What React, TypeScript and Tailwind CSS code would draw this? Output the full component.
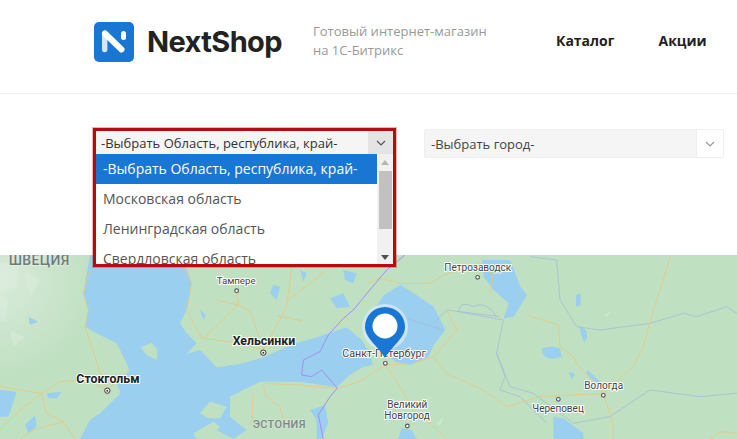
const roads = [
  "M270 60 L250 130 L265 180 L255 230 L285 320 L310 400 L322 420",
  "M0 410 L125 430 L180 395 L260 390 L322 420 L385 360",
  "M125 430 L140 490 L190 515 L225 567",
  "M0 540 L60 480 L125 430",
  "M190 515 L100 540 L60 567",
  "M550 50 L575 100 L560 180 L605 265 L695 275 L790 300 L860 170 L875 50",
  "M710 122 L715 165 L610 265",
  "M715 165 L750 185 L790 295",
  "M715 165 L650 150",
  "M830 198 L905 212",
  "M865 150 L980 60",
  "M790 400 L900 405 L1010 415 L1080 395 L1156 345",
  "M760 430 L755 520",
  "M790 405 L800 440 L840 470 L850 510",
  "M1101 100 L1140 85 L1200 100 L1290 100 L1330 75 L1440 40 L1480 75 L1470 130",
  "M1156 345 L1240 340 L1300 320 L1380 230",
  "M1340 180 L1370 240",
  "M1156 345 L1200 410 L1240 480 L1290 520 L1340 567",
  "M1300 320 L1340 370 L1450 420 L1520 470 L1620 440 L1810 430",
  "M1580 195 L1675 225 L1680 290 L1720 320 L1730 340 L1810 430",
  "M1810 430 L1900 350 L1930 290 L1960 180 L1990 90 L2010 20",
  "M1810 430 L1840 520 L1840 567",
  "M2130 567 L2160 545 L2211 550",
]

const regionLines = [
  "M1490 200 Q1460 150 1420 170 Q1380 150 1375 185 L1510 210 L1490 310 L1515 380 L1500 420 L1560 440 L1640 520",
  "M1590 20 L1670 30 L1680 150 L1730 230 L1800 240 L1950 220 L2050 190 L2090 200 L2180 170 L2211 190",
  "M1490 310 L1530 410 L1600 430 L1720 520 L1830 500 L1950 420 L2100 440 L2211 430",
  "M1300 220 L1340 180 L1500 200",
  "M1140 180 L1330 240",
]

const lakes = [
  "M1151 135 L1201 105 L1241 130 L1301 170 L1336 240 L1301 285 L1286 320 L1231 345 L1185 335 L1150 300 L1125 240 L1125 175 Z",
  "M1446 30 L1531 30 L1561 110 L1581 135 L1541 200 L1511 205 L1526 160 L1481 120 L1451 80 Z",
  "M1625 295 Q1650 285 1680 295 L1685 320 Q1650 335 1630 315 Z",
  "M1738 228 L1758 240 L1762 262 L1752 278 L1742 250 Z",
  "M1728 135 L1742 130 L1742 165 L1728 170 Z",
  "M1706 365 L1726 372 L1714 388 Z",
  "M1760 358 L1800 395 L1790 400 L1762 375 Z",
  "M1660 500 L1690 505 L1750 550 L1750 567 L1660 567 Z",
  "M1205 535 L1235 540 L1250 567 L1195 567 Z",
  "M820 105 L840 110 L830 150 L810 130 Z",
  "M990 145 L1030 130 L1050 170 L1010 175 Z",
  "M900 60 L920 70 L910 95 Z",
  "M1030 60 L1070 70 L1060 100 L1035 90 Z",
  "M600 180 L618 195 L610 210 Z",
  "M85 200 L115 215 L90 225 Z",
  "M140 430 L185 425 L170 445 L145 445 Z",
  "M75 525 L105 495 L110 530 L85 550 Z",
  "M930 480 L975 465 L985 520 L965 567 L950 567 L950 510 Z",
]

// pale forest patches on the Swedish side and around the lakes
const patches = [
  "M0 40 L60 30 L50 110 L0 130 Z",
  "M0 130 L25 150 L15 215 L0 210 Z",
  "M70 60 L120 90 L90 140 Z",
  "M30 240 L75 260 L40 290 Z",
  "M1490 130 L1530 110 L1510 135 Z",
  "M1810 195 L1840 180 L1820 200 Z",
  "M1310 520 L1330 500 L1320 530 Z",
]

function MapPicture() {
  return (
    <svg viewBox="0 15 2211 552" className="block h-full w-full" preserveAspectRatio="none">
      <defs>
        <radialGradient id="nordic" gradientUnits="userSpaceOnUse" cx="0" cy="90" r="300">
          <stop offset="0" stopColor="#d8ead9" />
          <stop offset="1" stopColor="#bfe0c1" />
        </radialGradient>
      </defs>
      <rect x="0" y="15" width="2211" height="552" fill="#bfe0c1" />
      <rect x="0" y="15" width="300" height="552" fill="url(#nordic)" />
      <g fill="#e2efe2" opacity="0.4">
        {patches.map((d, i) => (
          <path key={i} d={d} />
        ))}
      </g>
      {/* Baltic and the Gulf of Finland */}
      <path
        d="M270 15 L250 130 L265 180 L255 230 L300 255 L350 280 L380 340 L388 362 L350 400 L362 430 L320 470 L300 490 L270 510 L240 567 L590 567 L650 540 L700 567 L740 540 L690 500 L690 440 L780 395 L900 395 L1010 412 L1050 375 L1090 350 L1118 345 L1112 315 L1085 270 L1040 232 L950 262 L880 282 L790 322 L720 342 L650 352 L600 300 L560 312 L590 280 L560 250 L540 220 L560 180 L575 100 L545 15 Z"
        fill="#9bcff0"
      />
      <path d="M0 420 L50 425 L25 500 L0 500 Z" fill="#9bcff0" />
      {/* Aland and the Estonian islands */}
      <path d="M422 292 L455 278 L472 300 L470 330 L440 315 Z" fill="#bfe0c1" />
      <path d="M600 490 L630 455 L680 470 L660 505 L625 505 Z" fill="#bfe0c1" />
      <path d="M580 550 L640 515 L660 530 L620 567 L590 567 Z" fill="#bfe0c1" />
      <g fill="#9bcff0">
        {lakes.map((d, i) => (
          <path key={i} d={d} />
        ))}
      </g>
      <g fill="none" stroke="#a9bcd9" strokeWidth="2.5" strokeLinejoin="round">
        {regionLines.map((d, i) => (
          <path key={i} d={d} />
        ))}
      </g>
      <g fill="none" stroke="#e9c77f" strokeWidth="2.5" strokeLinejoin="round">
        {roads.map((d, i) => (
          <path key={i} d={d} />
        ))}
      </g>
      {/* state border */}
      <path
        d="M1215 15 L1160 60 L1101 130 L1060 180 L1030 205 L985 255 L960 305 L910 330 L905 375 L935 380 L965 360 L1012 415 L990 440 L955 495 L970 567"
        fill="none"
        stroke="#a98cf2"
        strokeWidth="3"
      />
      {/* city dots */}
      <g fill="#fff" stroke="#555" strokeWidth="3.5">
        <circle cx="710" cy="122" r="5.5" />
        <circle cx="1156" cy="340" r="5.5" />
        <circle cx="1433" cy="82" r="5.5" />
        <circle cx="1810" cy="436" r="5.5" />
        <circle cx="1675" cy="448" r="5.5" />
        <circle cx="1222" cy="528" r="5.5" />
      </g>
      <g fill="#fff" stroke="#333" strokeWidth="3">
        <circle cx="790" cy="308" r="8" />
        <circle cx="322" cy="422" r="8" />
      </g>
      <g fill="#333">
        <circle cx="790" cy="308" r="3" />
        <circle cx="322" cy="422" r="3" />
      </g>
      <g fontFamily="Roboto, sans-serif" paintOrder="stroke" stroke="#fff" strokeWidth="6" strokeLinejoin="round">
        <text x="26" y="44" fontSize="42" fontWeight="500" fill="#6f7b78" strokeWidth="4" stroke="#e4eee5" letterSpacing="1">ШВЕЦИЯ</text>
        <text x="758" y="534" fontSize="33" fontWeight="500" fill="#7b8785" strokeWidth="4" stroke="#d5e6d7" letterSpacing="1">ЭСТОНИЯ</text>
        <text x="650" y="102" fontSize="29" fill="#444">Тампере</text>
        <text x="698" y="286" fontSize="37" fontWeight="700" fill="#222">Хельсинки</text>
        <text x="229" y="400" fontSize="37" fontWeight="700" fill="#222">Стокгольм</text>
        <text x="1027" y="320" fontSize="32" fill="#444">Санкт-Петербург</text>
        <text x="1333" y="62" fontSize="30" fill="#444">Петрозаводск</text>
        <text x="1753" y="416" fontSize="30" fill="#444">Вологда</text>
        <text x="1597" y="486" fontSize="30" fill="#444">Череповец</text>
        <text x="1162" y="474" fontSize="30" fill="#444">Великий</text>
        <text x="1153" y="508" fontSize="30" fill="#444">Новгород</text>
      </g>
    </svg>
  )
}

function Chevron({ className }: { className: string }) {
  return (
    <svg viewBox="0 0 10 6" className={className} fill="none" stroke="currentColor" strokeWidth="1.2">
      <path d="M1 1l4 4 4-4" />
    </svg>
  )
}

export default function App() {
  return (
    <div className="h-[439px] w-[737px] overflow-hidden bg-white font-['Open_Sans',sans-serif]">
      <header className="flex h-[94px] items-start border-b border-[#f0f0f0] pl-[94px]">
        <div className="mt-[22px] h-10 w-10 rounded-[5px] bg-[#1976d2]">
          <svg viewBox="0 0 40 40" className="h-10 w-10" fill="none" strokeLinecap="round">
            <path d="M10.7 11.5V27.5" stroke="#d4e6f8" strokeWidth="5.4" />
            <path d="M11 11.5L27.5 27.5" stroke="#fff" strokeWidth="6" />
            <path d="M29.5 11.5V15.5" stroke="#fff" strokeWidth="5" />
          </svg>
        </div>
        <div className="ml-[13px] mt-[22px] w-[136px] whitespace-nowrap font-['Inter',sans-serif] text-[29px] font-bold leading-[40px] tracking-[-0.6px] text-[#222]">
          NextShop
        </div>
        <div className="ml-[30px] mt-[22px] w-[190px] text-[13px] leading-[19px] text-[#999]">
          Готовый интернет-магазин на 1С-Битрикс
        </div>
        <nav className="ml-[53px] mt-[31px] flex gap-[44px] text-[14px] font-bold leading-[19px] text-[#222]">
          <span>Каталог</span>
          <span>Акции</span>
        </nav>
      </header>

      <section className="flex h-[161px] items-start gap-[29px] pl-[94px] pt-[35px]">
        <div className="relative h-[29px] w-[301px]">
          <div className="absolute -left-px -top-px z-10 w-[303px] overflow-hidden border-[3px] border-[#b60c0c] shadow-[0_0_0_1px_rgba(190,40,40,0.35)]">
            <div className="flex h-[23px] items-center bg-[#f5f5f5] text-[13px] text-[#333]">
              <span className="flex-1 pl-[5px] pt-[3px]">-Выбрать Область, республика, край-</span>
              <span className="flex h-[23px] w-[25px] items-center justify-center bg-[#e4e4e4] text-[#555]">
                <Chevron className="h-[6px] w-[10px]" />
              </span>
            </div>
            <div className="flex h-[110px] bg-white">
              <ul className="flex-1 overflow-hidden text-[14px] text-[#555]">
                <li className="flex h-[30px] items-center bg-[#1976d2] pb-[2px] pl-[7px] text-white">-Выбрать Область, республика, край-</li>
                <li className="flex h-[30px] items-center pb-[2px] pl-[7px]">Московская область</li>
                <li className="flex h-[30px] items-center pb-[2px] pl-[7px]">Ленинградская область</li>
                <li className="flex h-[30px] items-center pb-[2px] pl-[7px]">Свердловская область</li>
              </ul>
              <div className="flex w-[16px] flex-col items-center bg-[#f1f1f1]">
                <span className="mt-[6px] h-0 w-0 border-x-[4px] border-b-[5px] border-x-transparent border-b-[#b5b5b5]" />
                <span className="mt-[6px] h-[58px] w-[13px] bg-[#c1c1c1]" />
                <span className="mt-auto mb-[4px] h-0 w-0 border-x-[4px] border-t-[5px] border-x-transparent border-t-[#505050]" />
              </div>
            </div>
          </div>
        </div>
        <div className="flex h-[29px] w-[300px] items-center rounded-[2px] border border-[#efefef] bg-[#f5f5f5] text-[13px] text-[#444]">
          <span className="flex-1 pl-[6px] pt-[2px]">-Выбрать город-</span>
          <span className="flex h-full w-[27px] items-center justify-center border-l border-[#efefef] bg-white text-[#999]">
            <Chevron className="h-[6px] w-[10px]" />
          </span>
        </div>
      </section>

      <section className="relative h-[184px] overflow-hidden">
        <MapPicture />
        {/* marker on Saint Petersburg */}
        <svg viewBox="0 0 46 54" className="absolute left-[362px] top-[49px] h-[54px] w-[46px]">
          <circle cx="23" cy="23" r="23" fill="#d3e8f8" opacity="0.85" />
          <path d="M23 3 A20 20 0 0 1 43 23 C43 34 30 42 23 54 C16 42 3 34 3 23 A20 20 0 0 1 23 3 Z" fill="#1976d2" />
          <circle cx="23" cy="22" r="12.5" fill="#fff" />
        </svg>
      </section>
    </div>
  )
}
